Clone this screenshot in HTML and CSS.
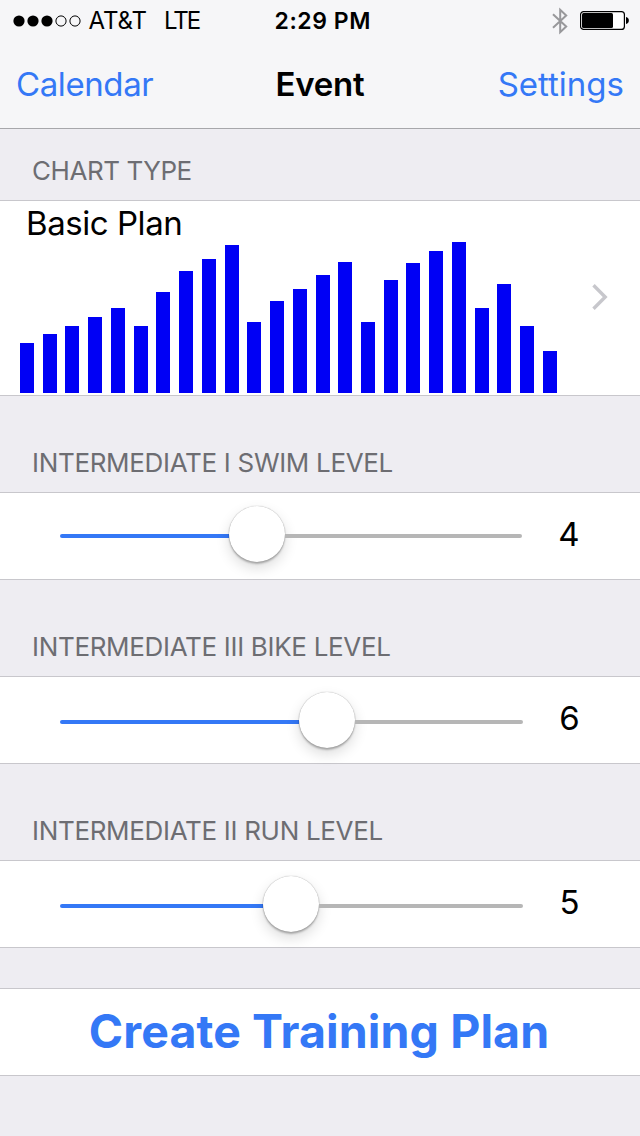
FILE: index.html
```html
<!DOCTYPE html>
<html lang="en">
<head>
  <meta charset="UTF-8" />
  <title>Event</title>
  <link rel="stylesheet" href="styles.css">
</head>
<body>
  <header class="top">
    <div class="status">
      <div class="carrier">
        <svg class="signal" width="68" height="12" viewBox="0 0 68 12">
          <circle cx="6" cy="6" r="5.6" />
          <circle cx="20" cy="6" r="5.6" />
          <circle cx="34" cy="6" r="5.6" />
          <circle class="off" cx="48" cy="6" r="5.1" />
          <circle class="off" cx="62" cy="6" r="5.1" />
        </svg>
        <span class="name">AT&amp;T</span>
        <span class="network">LTE</span>
      </div>
      <div class="time">2:29 PM</div>
      <div class="icons">
        <svg width="16" height="28" viewBox="0 0 16 28">
          <path d="M1 7.2L14.2 19.6L8.2 25.2V2.8L14.2 8.4L1 20.8" fill="none" stroke="#98989b" stroke-width="2" />
        </svg>
        <svg class="battery" width="50" height="20" viewBox="0 0 50 20">
          <rect x="0.6" y="0.6" width="43.8" height="17.8" rx="3" fill="#fff" stroke="#000" stroke-width="1.2" />
          <rect x="2" y="2" width="31" height="15" rx="1.5" />
          <path d="M46 6C49.8 6.5 49.8 12.5 46 13Z" />
        </svg>
      </div>
    </div>
    <nav class="nav">
      <a class="back">Calendar</a>
      <h1>Event</h1>
      <a class="settings">Settings</a>
    </nav>
  </header>

  <h2 class="first">Chart Type</h2>
  <div class="cell plan">
    <div class="plan-body">
      <div class="plan-name">Basic Plan</div>
      <div class="chart">
        <i style="height:50px"></i>
        <i style="height:59px"></i>
        <i style="height:66.6px"></i>
        <i style="height:75.6px"></i>
        <i style="height:84.6px"></i>
        <i style="height:66.6px"></i>
        <i style="height:101.4px"></i>
        <i style="height:122.4px"></i>
        <i style="height:134.5px"></i>
        <i style="height:148px"></i>
        <i style="height:71px"></i>
        <i style="height:92px"></i>
        <i style="height:104.3px"></i>
        <i style="height:117.8px"></i>
        <i style="height:131.4px"></i>
        <i style="height:71px"></i>
        <i style="height:113.4px"></i>
        <i style="height:129.8px"></i>
        <i style="height:142px"></i>
        <i style="height:151px"></i>
        <i style="height:84.6px"></i>
        <i style="height:108.8px"></i>
        <i style="height:66.6px"></i>
        <i style="height:42.4px"></i>
      </div>
    </div>
    <svg class="chevron" width="17" height="28" viewBox="0 0 17 28">
      <path d="M1.5 2.3L13.2 14L1.5 25.7" fill="none" stroke="#c7c7cc" stroke-width="3.4" />
    </svg>
  </div>

  <h2>Intermediate I Swim Level</h2>
  <div class="cell level swim">
    <div class="slider">
      <div class="fill" style="width:169px"></div>
      <div class="thumb"></div>
      <div class="rest"></div>
    </div>
    <span class="value">4</span>
  </div>

  <h2>Intermediate III Bike Level</h2>
  <div class="cell level">
    <div class="slider">
      <div class="fill" style="width:239px"></div>
      <div class="thumb"></div>
      <div class="rest"></div>
    </div>
    <span class="value">6</span>
  </div>

  <h2>Intermediate II Run Level</h2>
  <div class="cell level">
    <div class="slider">
      <div class="fill" style="width:203px"></div>
      <div class="thumb"></div>
      <div class="rest"></div>
    </div>
    <span class="value">5</span>
  </div>

  <div class="cell create">Create Training Plan</div>
</body>
</html>
```
FILE: styles.css
```css
* { box-sizing: border-box; }
body {
  margin: 0;
  height: 1136px;
  background: #eeedf2;
  color: #000;
  font-family: Inter, "Liberation Sans", sans-serif;
  font-size: 33px;
  overflow: hidden;
}
svg { display: block; }

/* status bar + navigation */
.top {
  height: 129px;
  background: #f6f6f8;
  border-bottom: 1px solid #a7a7ab;
}
.status, .nav {
  display: grid;
  grid-template-columns: 1fr auto 1fr;
  align-items: center;
}
.status {
  height: 41px;
  padding: 1px 10px 0 12.5px;
  font-size: 24px;
  line-height: 40px;
}
.carrier { display: flex; align-items: center; }
.signal .off { fill: none; stroke: #000; stroke-width: 1; }
.name { margin-left: 8px; letter-spacing: -0.1px; }
.network { margin-left: 17px; letter-spacing: -1.9px; }
.time { padding-left: 3px; font-weight: 600; font-size: 23px; letter-spacing: 0.55px; }
.icons { display: flex; justify-content: flex-end; align-items: center; }
.battery { margin-left: 12px; }
.nav {
  height: 87px;
  padding: 0 16px 0 16px;
  line-height: 87px;
}
.nav a { color: #3478f6; }
.back { letter-spacing: -0.4px; }
.settings { text-align: right; }
h1 { margin: 0; font-size: 33px; font-weight: 600; letter-spacing: -0.2px; }

/* section titles */
h2 {
  margin: 0;
  height: 96px;
  padding: 51px 0 0 32px;
  color: #6d6d72;
  font-size: 26px;
  line-height: 32px;
  font-weight: 400;
  letter-spacing: -0.32px;
  text-transform: uppercase;
}
h2.first { height: 71px; padding-top: 26px; letter-spacing: -0.45px; }

.cell {
  display: flex;
  background: #fff;
  border-top: 1px solid #c8c7cc;
  border-bottom: 1px solid #c8c7cc;
}
.plan {
  height: 196px;
  padding: 0 31px 2px 20px;
  justify-content: space-between;
  align-items: center;
}
.plan-body {
  height: 192px;
  display: flex;
  flex-direction: column;
  justify-content: space-between;
}
.plan-name { padding-left: 6px; height: 41px; line-height: 44px; letter-spacing: -0.45px; }
.chart { display: flex; align-items: flex-end; gap: 8.74px; height: 151px; }
.chart i { width: 14px; background: #0000f5; }

.level {
  height: 88px;
  padding: 13px 0 0 60px;
  align-items: flex-start;
}
.slider { display: flex; align-items: center; width: 463px; height: 56px; margin-top: 2px; }
.swim .slider { width: 462px; margin-top: 0; }
.fill, .rest { height: 4px; margin-top: 4px; }
.fill { background: #3478f6; border-radius: 2px 0 0 2px; }
.rest { flex: 1; background: #b6b6b6; border-radius: 0 2px 2px 0; }
.thumb {
  width: 56px;
  height: 56px;
  border-radius: 50%;
  background: #fff;
  box-shadow: 0 0 1px rgba(0,0,0,.4), 0 2px 2px rgba(0,0,0,.25), 0 6px 14px rgba(0,0,0,.14);
}
.value { width: 93px; text-align: center; line-height: 56px; }
.swim .value { width: 94px; }

.create {
  height: 88px;
  margin-top: 40px;
  padding-right: 2px;
  justify-content: center;
  color: #3478f6;
  font-size: 46.5px;
  font-weight: 700;
  line-height: 84px;
  letter-spacing: 0.1px;
}
```
